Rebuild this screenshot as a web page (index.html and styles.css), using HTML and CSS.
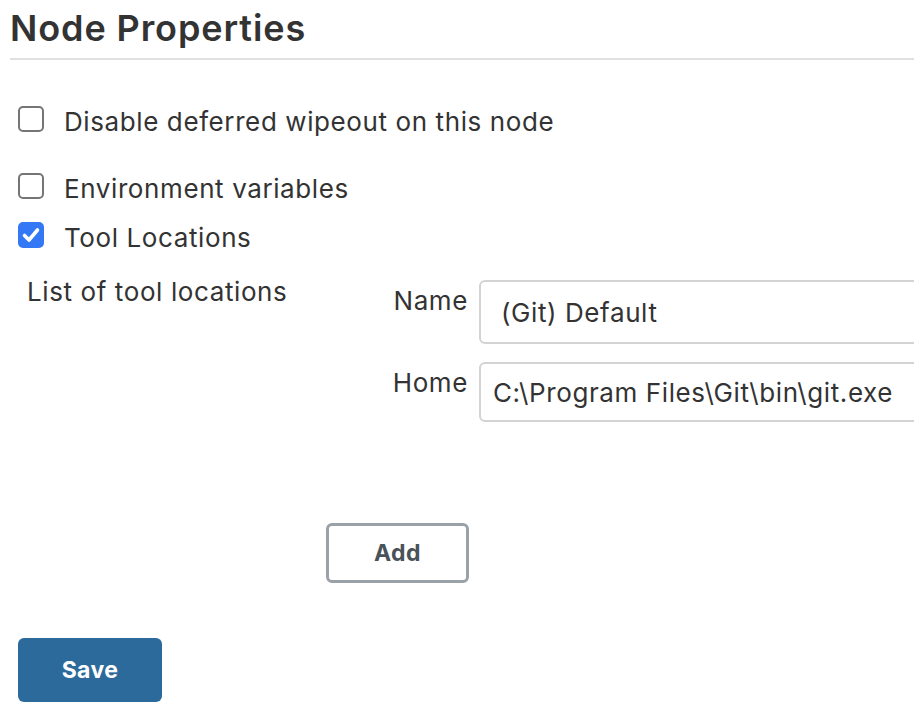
FILE: index.html
```html
<!DOCTYPE html>
<html lang="en">
<head>
<meta charset="utf-8">
<title>Node Properties</title>
<link rel="stylesheet" href="styles.css">
</head>
<body>
<div class="page">
  <h1 class="title">Node Properties</h1>
  <div class="options">
    <label class="check check-first"><span class="box"></span><span class="check-text">Disable deferred wipeout on this node</span></label>
    <label class="check check-env"><span class="box"></span><span class="check-text">Environment variables</span></label>
    <label class="check check-tool"><span class="box checked"><svg viewBox="0 0 26 26" width="26" height="26"><path d="M6.5 13.5 L11 18 L19.5 8" fill="none" stroke="#fff" stroke-width="3.6" stroke-linecap="round" stroke-linejoin="round"/></svg></span><span class="check-text">Tool Locations</span></label>
  </div>
  <div class="tools">
    <div class="tools-label">List of tool locations</div>
    <div class="tools-body">
      <div class="field field-name"><span class="field-label">Name</span><input class="field-input input-name" type="text" value=" (Git) Default"></div>
      <div class="field field-home"><span class="field-label">Home</span><input class="field-input input-home" type="text" value="C:\Program Files\Git\bin\git.exe"></div>
    </div>
  </div>
  <div class="add-row"><button class="btn-add" type="button">Add</button></div>
  <div class="save-row"><button class="btn-save" type="button">Save</button></div>
</div>
</body>
</html>
```

FILE: styles.css
```css
html, body {
  margin: 0;
  padding: 0;
  overflow: hidden;
  background: #fff;
}
body {
  font-family: "Inter", "Liberation Sans", sans-serif;
  color: #333;
}
.page {
  padding-left: 10px;
}
.title {
  margin: 0;
  padding-top: 8px;
  padding-bottom: 10px;
  padding-left: 0;
  font-size: 36px;
  line-height: 40px;
  font-weight: 600;
  letter-spacing: 0.9px;
  color: #333;
  border-bottom: 2px solid #e0e0e0;
}
.options {
  display: flex;
  flex-direction: column;
  padding-top: 46px;
}
.check {
  display: flex;
  align-items: flex-start;
  font-size: 26px;
  line-height: 32px;
  letter-spacing: 0.6px;
  padding-left: 8px;
}
.check-env { margin-top: 35px; }
.check-tool { margin-top: 17px; }
.box {
  box-sizing: border-box;
  width: 26px;
  height: 26px;
  border: 2px solid #757575;
  border-radius: 5px;
  flex: none;
  display: flex;
}
.box.checked {
  background: #3478f6;
  border-color: #3478f6;
}
.box.checked svg {
  margin: -2px;
}
.check-text {
  margin-left: 20px;
}
.tools {
  display: flex;
  margin-top: 22px;
  font-size: 26px;
  line-height: 32px;
  letter-spacing: 0.6px;
}
.tools-label {
  width: 349px;
  padding-left: 17px;
  flex: none;
}
.tools-body {
  display: flex;
  flex-direction: column;
  gap: 18px;
  margin-top: 4px;
}
.field {
  display: flex;
  align-items: flex-start;
  gap: 11px;
}
.field-label {
  width: 92px;
  text-align: right;
  margin-top: 5px;
}
.field-input {
  box-sizing: border-box;
  width: 520px;
  height: 64px;
  border: 2px solid #d3d3d3;
  border-radius: 6px;
  padding: 0 12px;
  font-family: "Inter", "Liberation Sans", sans-serif;
  font-size: 26px;
  letter-spacing: 0.6px;
  color: #333;
  background: #fff;
  outline: none;
}
.input-home {
  height: 60px;
}
.add-row {
  padding-left: 316px;
  margin-top: 101px;
}
.btn-add {
  box-sizing: border-box;
  width: 143px;
  height: 60px;
  border: 3px solid #9aa2a8;
  border-radius: 6px;
  background: #fff;
  color: #4a5259;
  font-family: "Inter", "Liberation Sans", sans-serif;
  font-size: 23px;
  font-weight: 700;
  letter-spacing: 0.4px;
  cursor: pointer;
}
.save-row {
  padding-left: 8px;
  margin-top: 55px;
}
.btn-save {
  box-sizing: border-box;
  width: 144px;
  height: 64px;
  border: none;
  border-radius: 6px;
  background: #2c6a9c;
  color: #fff;
  font-family: "Inter", "Liberation Sans", sans-serif;
  font-size: 23px;
  font-weight: 700;
  letter-spacing: 0.4px;
  cursor: pointer;
}
```
